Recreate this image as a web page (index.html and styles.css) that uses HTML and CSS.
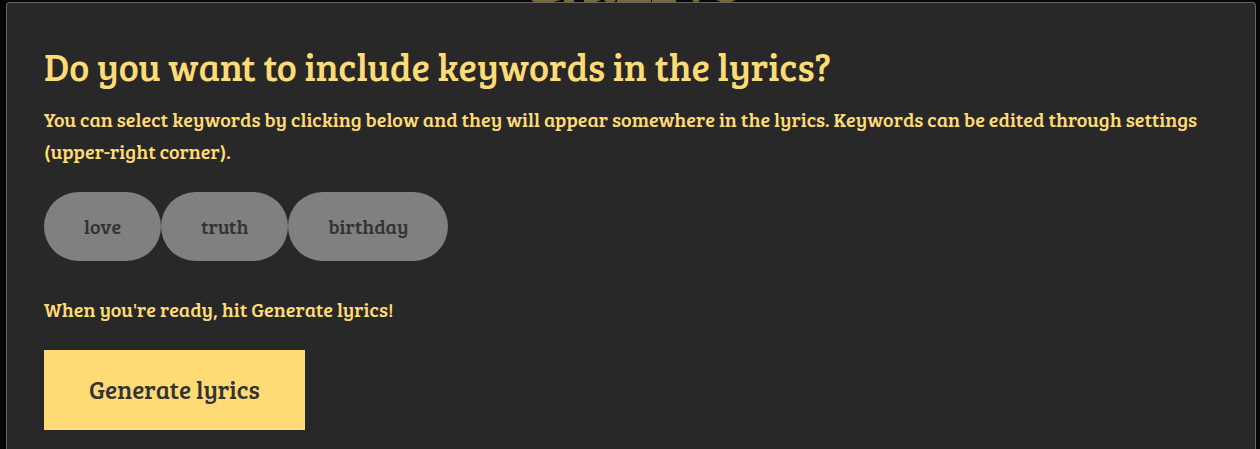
FILE: index.html
```html
<!DOCTYPE html>
<html lang="en">
<head>
<meta charset="utf-8">
<title>Generate lyrics</title>
<link rel="stylesheet" href="styles.css">
</head>
<body>
<svg class="backdrop-title" viewBox="0 0 210 3" aria-hidden="true">
  <path d="M1 0h30l-8 2H4zM34 0h10v2H34zM54 0h17l-5 2H54zM74 0h12l-2 2h-8zM87 0h34v2H87zM122 0h24v2h-24zM162 0h8l-2 2h-4zM186 0h20l-5 2h-10z"/>
</svg>
<main class="dialog">
  <h1 class="dialog-title">Do you want to include keywords in the lyrics?</h1>
  <p class="text">You can select keywords by clicking below and they will appear somewhere in the lyrics. Keywords can be edited through settings (upper-right corner).</p>
  <div class="keywords">
    <button class="keyword" type="button">love</button>
    <button class="keyword" type="button">truth</button>
    <button class="keyword" type="button">birthday</button>
  </div>
  <p class="text">When you're ready, hit Generate lyrics!</p>
  <button class="generate" type="button">Generate lyrics</button>
</main>
</body>
</html>
```
FILE: styles.css
```css
* {
  box-sizing: border-box;
}

body {
  margin: 0;
  padding: 2px 4px 0 6px;
  background: #060606;
  color: #ffdb75;
  font-family: "Bree Serif", "DejaVu Serif Condensed", "DejaVu Serif", serif;
}

.backdrop-title {
  position: absolute;
  top: 0;
  left: 530px;
  width: 210px;
  height: 3px;
  fill: #786a38;
}

.dialog {
  position: relative;
  min-height: calc(100vh - 2px);
  padding: 36px 37px 18px;
  background: #282828;
  border: 1px solid #666;
  border-bottom: 0;
  border-radius: 4px 4px 0 0;
}

.dialog-title {
  margin: 0 0 10px;
  font-size: 38px;
  line-height: 54px;
  font-weight: 400;
}

.text {
  margin: 0;
  font-size: 20px;
  line-height: 32px;
  font-weight: 400;
}

.keywords {
  display: flex;
  flex-wrap: wrap;
  margin: 25px 0 32px;
}

.keyword {
  height: 69px;
  padding: 0 40px 2px;
  border: 0;
  border-radius: 35px;
  background: #808080;
  color: #333;
  font: 20px "Bree Serif", "DejaVu Serif Condensed", "DejaVu Serif", serif;
}

.generate {
  height: 80px;
  margin-top: 25px;
  padding: 0 45px 2px;
  border: 0;
  background: #ffdb75;
  color: #333;
  font: 25px "Bree Serif", "DejaVu Serif Condensed", "DejaVu Serif", serif;
}
```
